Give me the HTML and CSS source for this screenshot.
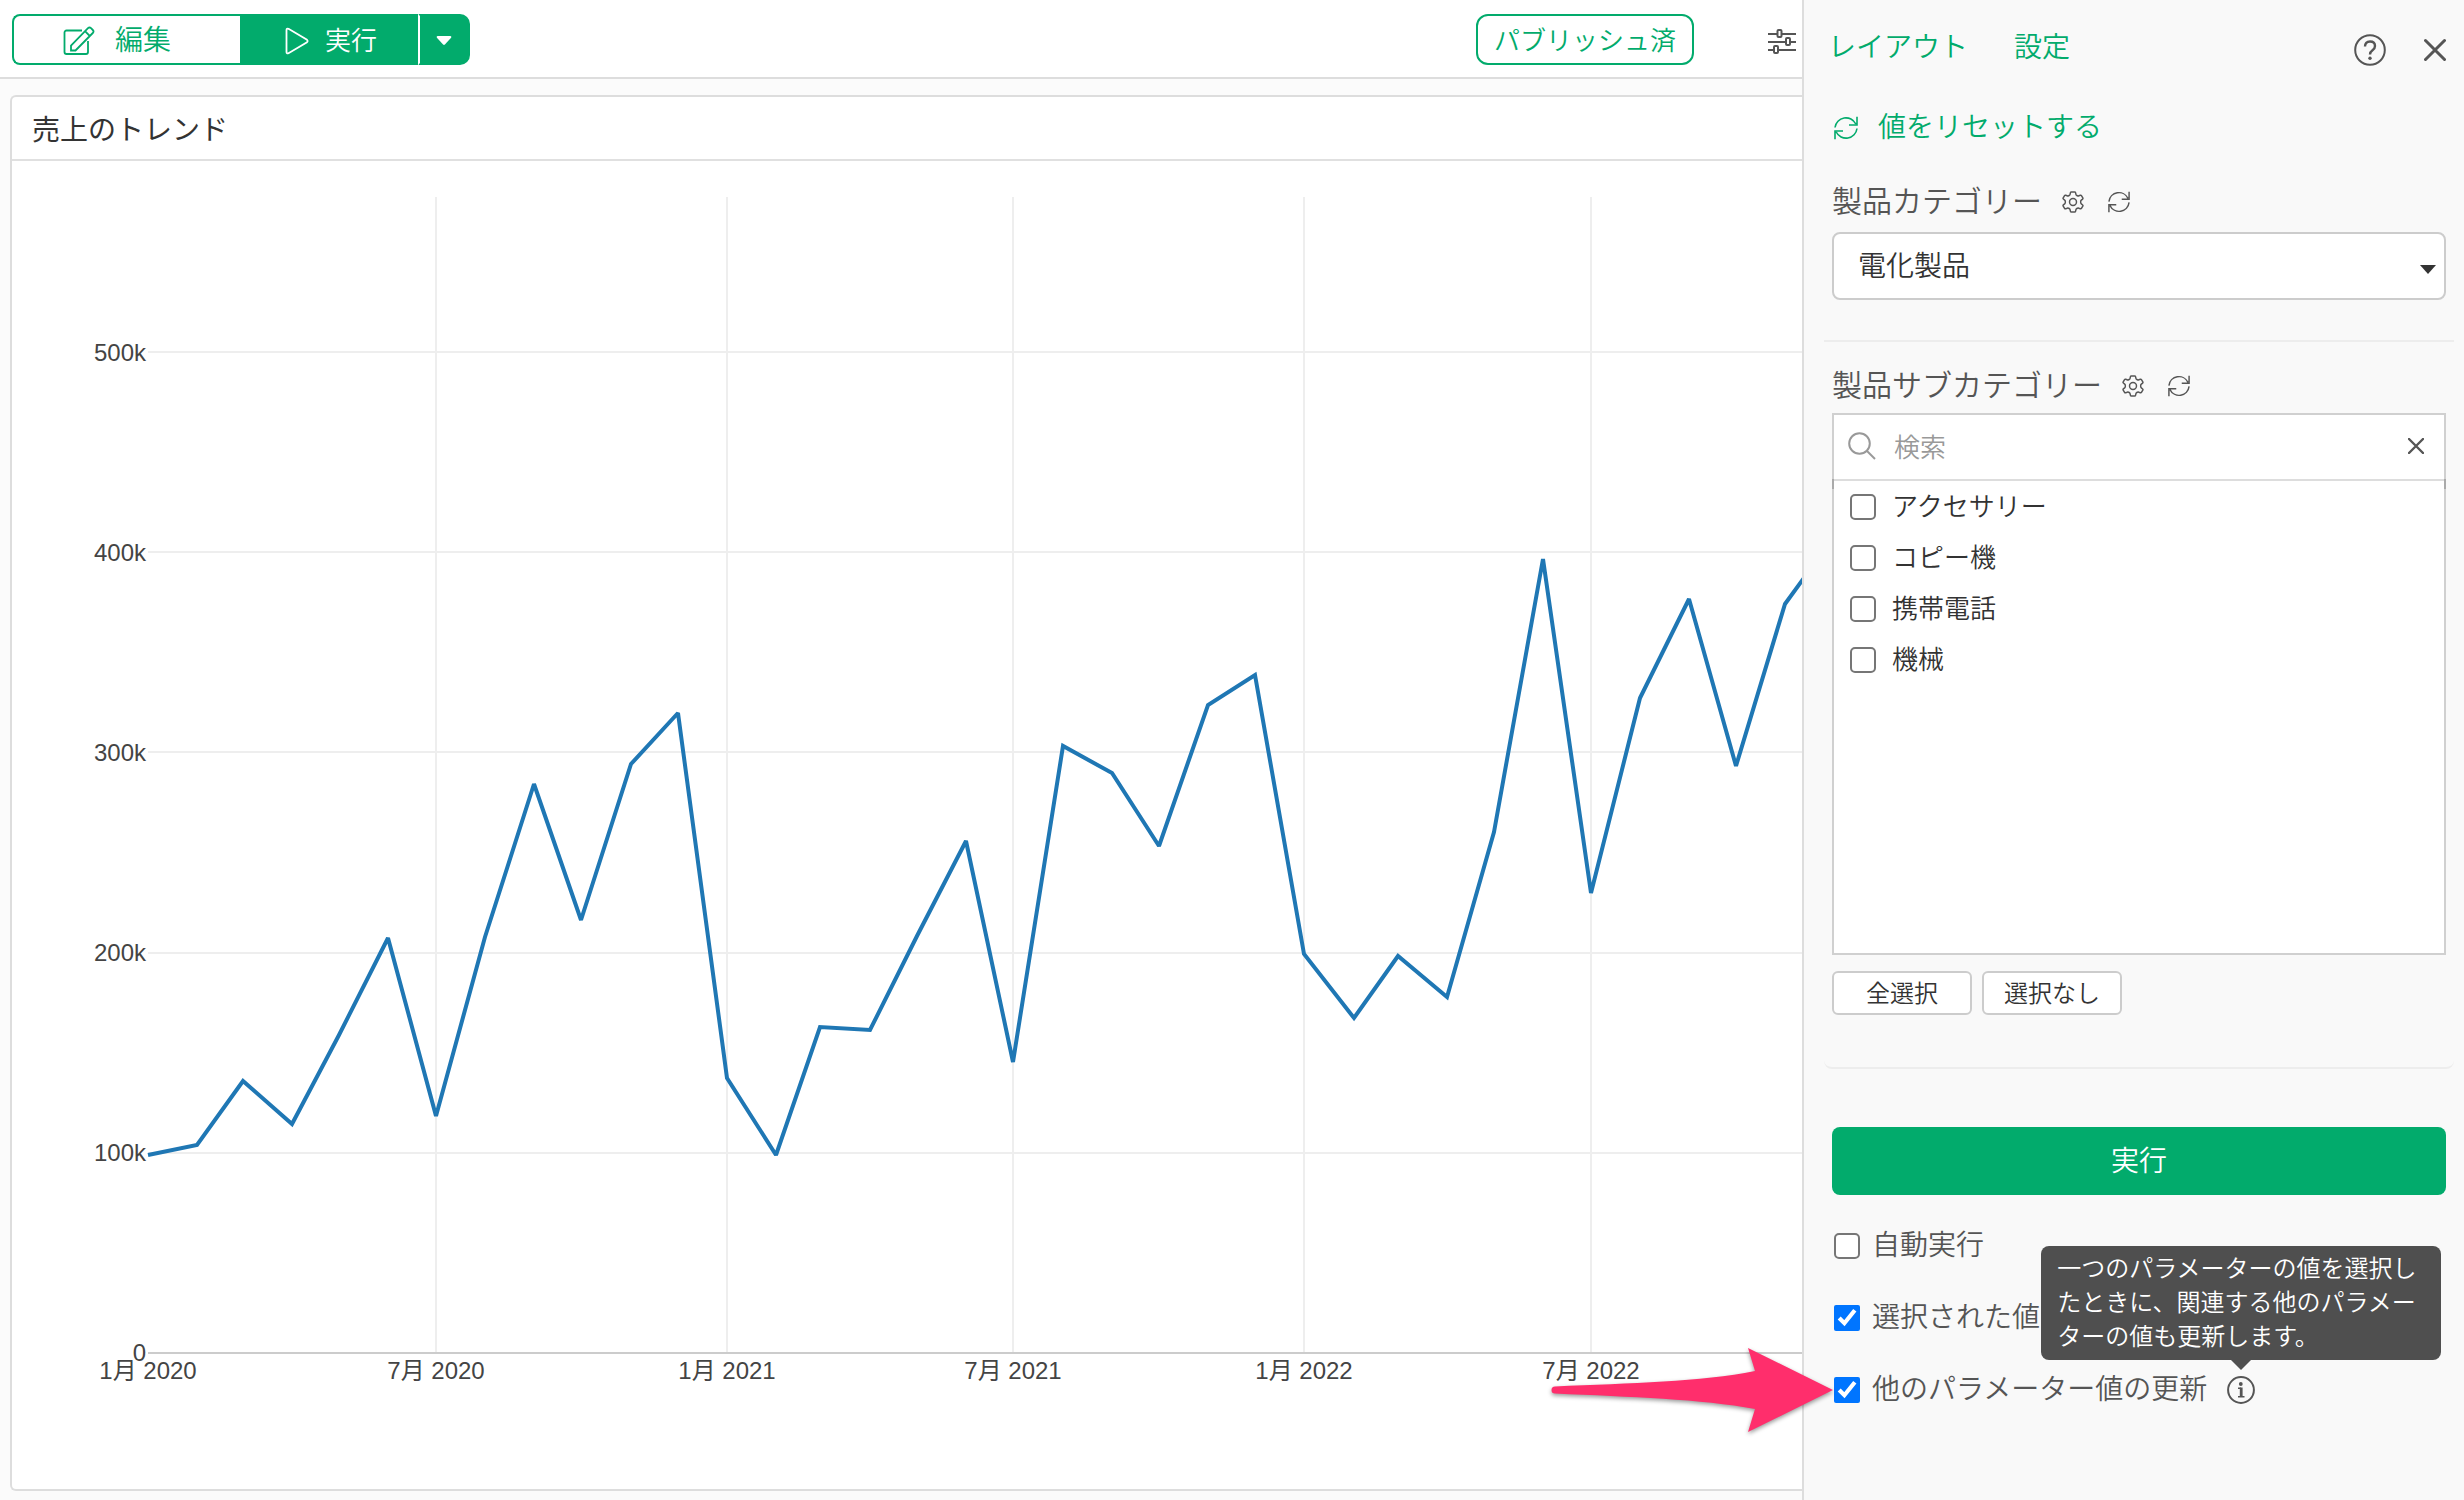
FILE: index.html
```html
<!DOCTYPE html>
<html lang="ja">
<head>
    <meta charset="UTF-8">
    <title>売上のトレンド</title>
    <link rel="stylesheet" href="styles.css">
</head>
<body>
    <!-- shared icons -->
    <svg class="sprite" aria-hidden="true">
        <symbol id="icon-refresh" viewBox="0 0 24 24">
            <path d="M1 11.500A11 11 0 0 1 21.800 8M23 .8V9h-8M23 12.500A11 11 0 0 1 2.200 16M1 23.200V15h8"/>
        </symbol>
        <symbol id="icon-gear" viewBox="0 0 24 24">
            <path stroke-linejoin="round" d="M10.200 1h3.600q.8 0 1 .8l.4 1.800q.2.900 1 1.300l.6.300q.8.400 1.600 0l1.600-.6q.8-.3 1.200.4l1.500 2.600q.4.700-.2 1.200l-1.400 1.200q-.7.600-.7 1.400v1.200q0 .8.700 1.400l1.400 1.200q.6.500.2 1.200L21.200 19q-.4.700-1.200.4l-1.600-.6q-.8-.4-1.600 0l-.6.300q-.8.400-1 1.300l-.4 1.800q-.2.800-1 .8h-3.600q-.8 0-1-.8l-.4-1.800q-.2-.9-1-1.300l-.6-.3q-.8-.4-1.600 0l-1.600.6q-.8.300-1.200-.4l-1.500-2.600q-.4-.7.2-1.200l1.400-1.200q.7-.6.700-1.400v-1.200q0-.8-.7-1.400L1.500 8.800q-.6-.5-.2-1.200L2.800 5q.4-.7 1.200-.4l1.600.6q.8.400 1.600 0l.6-.3q.8-.4 1-1.300l.4-1.800q.2-.8 1-.8z"/>
            <circle cx="12" cy="12" r="3.800"/>
        </symbol>
    </svg>

    <div class="app">
        <main class="main">
            <header class="toolbar">
                <div class="btn-group">
                    <button type="button" class="btn-edit">
                        <svg class="icon" width="32" height="30" viewBox="0 0 32 30">
                            <path stroke-width="1.800" d="M19 4.500H3.500a2 2 0 0 0-2 2V26a2 2 0 0 0 2 2H23a2 2 0 0 0 2-2V15"/>
                            <path stroke-width="1.800" d="M8 24.500v-5L25 2.200q1.500-1.500 3 0l1.800 1.800q1.500 1.500 0 3L12.500 24.500zM22 5.200l4.800 4.800"/>
                        </svg>
                        編集
                    </button>
                    <button type="button" class="btn-run">
                        <svg class="icon" width="24" height="28" viewBox="0 0 24 28">
                            <path stroke-width="1.800" d="M1.500 3v22q0 2 2 1.200l18.500-11q1.200-1.200 0-2.400L3.500 1.800q-2-.8-2 1.200z"/>
                        </svg>
                        実行
                    </button>
                    <button type="button" class="btn-more" aria-label="実行オプション">
                        <svg width="16" height="10" viewBox="0 0 16 10"><path d="M1.500 0h13q1.500.500.600 1.700L8.900 8.500q-.9.800-1.800 0L.9 1.700Q0 .500 1.500 0z" fill="#fff"/></svg>
                    </button>
                </div>
                <button type="button" class="btn-published">パブリッシュ済</button>
                <button type="button" class="icon-btn btn-sliders" aria-label="パラメーター">
                    <svg class="icon" width="28" height="26" viewBox="0 0 28 26">
                        <path d="M0 5h9.500M14 5h14M0 13h18M22.500 13H28M0 21h6M10.500 21H28"/>
                        <rect x="9.500" y="1" width="4" height="7" rx="1"/>
                        <rect x="18" y="9" width="4" height="7" rx="1"/>
                        <rect x="6" y="17" width="4" height="7" rx="1"/>
                    </svg>
                </button>
            </header>

            <section class="card">
                <h1 class="card-title">売上のトレンド</h1>
                <div class="chart">
                    <svg class="plot" role="img" aria-label="売上のトレンド">
                        <g class="grid">
                            <path d="M136 992H2400M136 792H2400M136 591H2400M136 391H2400M136 191H2400"/>
                            <path d="M424 36V1191M715 36V1191M1001 36V1191M1292 36V1191M1579 36V1191"/>
                        </g>
                        <path class="axis" d="M136 1192H2400"/>
                        <polyline class="series" points="136,994 185,984 231,920 280,963 327,874 376,777 424,955 473,776 522,623 569,759 619,603 666,552 715,917 764,994 808,866 858,869 905,775 954,680 1001,901 1051,585 1100,612 1147,685 1196,544 1243,514 1292,793 1342,857 1386,795 1435,836 1482,671 1531,398 1579,732 1628,537 1677,438 1724,605 1773,443 1821,377"/>
                        <g class="y-labels">
                            <text x="134" y="1200">0</text>
                            <text x="134" y="1000">100k</text>
                            <text x="134" y="800">200k</text>
                            <text x="134" y="600">300k</text>
                            <text x="134" y="400">400k</text>
                            <text x="134" y="200">500k</text>
                        </g>
                        <g class="x-labels">
                            <text x="136" y="1218">1月 2020</text>
                            <text x="424" y="1218">7月 2020</text>
                            <text x="715" y="1218">1月 2021</text>
                            <text x="1001" y="1218">7月 2021</text>
                            <text x="1292" y="1218">1月 2022</text>
                            <text x="1579" y="1218">7月 2022</text>
                        </g>
                    </svg>
                </div>
            </section>
        </main>

        <aside class="panel">
            <div class="panel-head">
                <a href="#">レイアウト</a>
                <a href="#">設定</a>
                <button type="button" class="icon-btn btn-help" aria-label="ヘルプ">
                    <svg class="icon" width="32" height="32" viewBox="0 0 32 32">
                        <circle cx="16" cy="16" r="14.800"/>
                        <path stroke-width="2.400" d="M11 12.500Q11 7.500 16 7.500t5 4.500q0 2.500-2.500 4.300T16 20.500"/>
                        <circle class="dot" cx="16" cy="24.300" r="1.700"/>
                    </svg>
                </button>
                <button type="button" class="icon-btn" aria-label="閉じる">
                    <svg class="icon" width="22" height="30" viewBox="0 0 22 30"><path stroke-width="3" stroke-linecap="round" d="M1.500 5.500l19 19M20.500 5.500l-19 19"/></svg>
                </button>
            </div>

            <a class="reset" href="#">
                <svg class="icon icon-thin" width="24" height="24"><use href="#icon-refresh"/></svg>
                値をリセットする
            </a>

            <section class="param">
                <div class="param-head">
                    <label for="category">製品カテゴリー</label>
                    <button type="button" class="icon-btn" aria-label="設定"><svg class="icon icon-thin" width="22" height="22"><use href="#icon-gear"/></svg></button>
                    <button type="button" class="icon-btn" aria-label="リセット"><svg class="icon icon-thin" width="22" height="22"><use href="#icon-refresh"/></svg></button>
                </div>
                <div class="select-wrap">
                    <select id="category">
                        <option>電化製品</option>
                    </select>
                    <svg class="caret" width="16" height="9" viewBox="0 0 16 9"><path d="M0 0h16L8 9z"/></svg>
                </div>
            </section>

            <section class="param param-last">
                <div class="param-head">
                    <label for="search">製品サブカテゴリー</label>
                    <button type="button" class="icon-btn" aria-label="設定"><svg class="icon icon-thin" width="22" height="22"><use href="#icon-gear"/></svg></button>
                    <button type="button" class="icon-btn" aria-label="リセット"><svg class="icon icon-thin" width="22" height="22"><use href="#icon-refresh"/></svg></button>
                </div>
                <div class="picker">
                    <div class="search">
                        <svg class="icon" width="28" height="28" viewBox="0 0 28 28"><circle cx="11.500" cy="11.500" r="10.300"/><path d="M19 19l8 8"/></svg>
                        <input type="text" id="search" placeholder="検索">
                        <button type="button" class="icon-btn" aria-label="クリア">
                            <svg class="icon" width="16" height="16" viewBox="0 0 16 16"><path stroke-width="2.400" stroke-linecap="round" d="M1 1l14 14M15 1L1 15"/></svg>
                        </button>
                    </div>
                    <div class="options">
                        <label><input type="checkbox">アクセサリー</label>
                        <label><input type="checkbox">コピー機</label>
                        <label><input type="checkbox">携帯電話</label>
                        <label><input type="checkbox">機械</label>
                    </div>
                </div>
                <div class="picker-actions">
                    <button type="button">全選択</button>
                    <button type="button">選択なし</button>
                </div>
            </section>

            <button type="button" class="btn-submit">実行</button>

            <div class="settings">
                <div class="setting">
                    <label><input type="checkbox">自動実行</label>
                </div>
                <div class="setting">
                    <label><input type="checkbox" checked>選択された値</label>
                </div>
                <div class="setting">
                    <label><input type="checkbox" checked>他のパラメーター値の更新</label>
                    <span class="info">
                        <svg class="icon" width="28" height="28" viewBox="0 0 28 28">
                            <circle cx="14" cy="14" r="12.900"/>
                            <circle class="dot" cx="13.800" cy="8" r="1.900"/>
                            <path stroke-width="1.600" d="M11 12.200h3M11 20.800h6.500"/>
                            <path stroke-width="2.800" d="M14.200 11.500v9"/>
                        </svg>
                        <span class="tooltip" role="tooltip">一つのパラメーターの値を選択したときに、関連する他のパラメーターの値も更新します。</span>
                    </span>
                    <svg class="pointer" width="290" height="100" viewBox="0 0 290 100" aria-hidden="true">
                        <path d="M4 46.500C80 43 150 42 204 31L197 8 282 50 197 92 204 69C150 59 80 57 4 53.500A3.500 3.500 0 0 1 4 46.500z"/>
                    </svg>
                </div>
            </div>
        </aside>
    </div>
</body>
</html>
```
FILE: styles.css
```css
* {
    box-sizing: border-box;
}
body {
    margin: 0;
    background: #fbfbfb;
    color: #333;
    font-family: "Liberation Sans", "Noto Sans CJK JP", sans-serif;
    font-size: 28px;
    font-weight: 350;
    line-height: 40px;
}
button, input, select {
    font: inherit;
    color: inherit;
    margin: 0;
}
button {
    padding: 2px 0 0;
    cursor: pointer;
}
a {
    color: #02ab6c;
    text-decoration: none;
}
.sprite {
    position: absolute;
    width: 0;
    height: 0;
}
.icon {
    display: block;
    flex: none;
    fill: none;
    stroke: currentColor;
    stroke-width: 2;
}
.icon-thin {
    stroke-width: 1.6;
}
.icon .dot {
    fill: currentColor;
    stroke: none;
}
.icon-btn {
    display: flex;
    padding: 0;
    border: 0;
    background: none;
    color: #555;
}
.app {
    display: flex;
    min-height: 100vh;
}
.main {
    display: flex;
    flex-direction: column;
    flex: 1;
    min-width: 0;
}

/* toolbar */
.toolbar {
    display: flex;
    align-items: center;
    height: 79px;
    padding: 2px 6px 0 12px;
    background: #fff;
    border-bottom: 2px solid #ddd;
}
.btn-group {
    display: flex;
    margin-right: auto;
}
.btn-group button {
    display: flex;
    align-items: center;
    justify-content: center;
    height: 51px;
    border: 2px solid #02ab6c;
}
.btn-group .btn-edit {
    width: 228px;
    padding-right: 20px;
    gap: 20px;
    background: #fff;
    color: #02ab6c;
    border-right: 0;
    border-radius: 8px 0 0 8px;
}
.btn-group .btn-run {
    width: 178px;
    padding-left: 4px;
    gap: 16px;
    background: #02ab6c;
    color: #fff;
    font-size: 26px;
}
.btn-group .btn-more {
    width: 52px;
    background: #02ab6c;
    border-left-color: #fff;
    border-radius: 0 10px 10px 0;
}
.btn-published {
    height: 51px;
    padding: 2px 16px 0;
    border: 2px solid #02ab6c;
    border-radius: 12px;
    background: #fff;
    color: #02ab6c;
    font-size: 26px;
}
.btn-sliders {
    margin-left: 74px;
    padding-top: 4px;
}

/* chart card */
.card {
    display: flex;
    flex-direction: column;
    flex: 1;
    margin: 16px 0 9px 10px;
    background: #fff;
    border: 2px solid #ddd;
    border-right: 0;
    border-radius: 6px 0 0 6px;
}
.card-title {
    margin: 0;
    padding: 14px 20px 8px;
    border-bottom: 2px solid #e0e0e0;
    font-size: 28px;
    font-weight: 400;
}
.chart {
    display: flex;
    flex: 1;
    min-height: 1250px;
}
.plot {
    flex: 1;
    min-width: 0;
    font-size: 24px;
    font-weight: 400;
    fill: #444;
}
.grid {
    stroke: #eee;
    stroke-width: 2;
}
.axis {
    stroke: #ccc;
    stroke-width: 2;
}
.series {
    fill: none;
    stroke: #1f77b4;
    stroke-width: 4;
    stroke-miterlimit: 2;
}
.y-labels {
    text-anchor: end;
}
.x-labels {
    text-anchor: middle;
}

/* parameter panel */
.panel {
    flex: none;
    width: 662px;
    padding: 28px 18px 40px 28px;
    background: #f9f9f9;
    border-left: 2px solid #ddd;
    color: #555;
}
.panel-head {
    display: flex;
    align-items: center;
    margin-left: -4px;
}
.panel-head a {
    margin-right: 46px;
}
.btn-help {
    margin: 0 38px 0 auto;
}
.panel-head .icon-btn {
    padding-top: 4px;
}
.reset {
    display: flex;
    align-items: center;
    gap: 20px;
    margin-top: 40px;
    padding-left: 2px;
}
.param {
    margin: 34px -8px 0;
    padding: 0 8px 40px;
    border-bottom: 2px solid #ededed;
}
.param-last {
    margin-top: 24px;
    padding-bottom: 52px;
    border-radius: 0 0 8px 8px;
}
.param-head {
    display: flex;
    align-items: center;
    gap: 24px;
    font-size: 30px;
}
.param-head label {
    margin-right: -4px;
}
.select-wrap {
    position: relative;
    margin-top: 10px;
}
.select-wrap select {
    width: 100%;
    height: 68px;
    padding: 2px 50px 0 24px;
    appearance: none;
    background: #fff;
    border: 2px solid #ccc;
    border-radius: 8px;
    color: #333;
}
.caret {
    position: absolute;
    right: 10px;
    top: 33px;
    fill: #333;
}
.picker {
    margin-top: 7px;
    height: 542px;
    background: #fff;
    border: 2px solid #d0d0d0;
    color: #333;
    font-size: 26px;
}
.search {
    display: flex;
    align-items: center;
    gap: 18px;
    height: 66px;
    padding: 0 20px 3px 14px;
    border-bottom: 2px solid #ddd;
}
.search .icon {
    color: #999;
}
.search .icon-btn .icon {
    color: #555;
}
.search input {
    flex: 1;
    min-width: 0;
    padding: 4px 0 0;
    border: 0;
    outline: 0;
    background: none;
}
.search input::placeholder {
    color: #999;
}
.options {
    position: relative;
}
/* darker ends where the list meets the search box */
.options::before {
    content: "";
    position: absolute;
    left: -2px;
    right: -2px;
    top: -2px;
    height: 10px;
    border: solid #aaa;
    border-width: 0 2px;
}
.options label {
    position: relative;
    display: flex;
    align-items: center;
    gap: 16px;
    height: 51px;
    padding-left: 16px;
}
input[type="checkbox"] {
    flex: none;
    width: 26px;
    height: 26px;
}
input[type="checkbox"]:not(:checked) {
    appearance: none;
    background: #fff;
    border: 2px solid #767676;
    border-radius: 5px;
}
.picker-actions {
    display: flex;
    gap: 10px;
    margin-top: 16px;
}
.picker-actions button {
    width: 140px;
    height: 44px;
    background: #fff;
    border: 2px solid #ccc;
    border-radius: 6px;
    color: #333;
    font-size: 24px;
    line-height: 36px;
}
.btn-submit {
    display: block;
    width: 100%;
    height: 68px;
    margin-top: 58px;
    background: #02ab6c;
    border: 0;
    border-radius: 8px;
    color: #fff;
}
.settings {
    margin-top: 15px;
}
.setting {
    position: relative;
    display: flex;
    align-items: center;
    gap: 20px;
    height: 72px;
    padding-left: 2px;
}
.setting label {
    display: flex;
    align-items: center;
    gap: 12px;
}
.info {
    position: relative;
}
.tooltip {
    position: absolute;
    right: -186px;
    bottom: 44px;
    width: 400px;
    padding: 6px 16px;
    background: #4f4f4f;
    border-radius: 8px;
    color: #fff;
    font-size: 24px;
    line-height: 34px;
}
.tooltip::after {
    content: "";
    position: absolute;
    right: 190px;
    top: 100%;
    border: 10px solid transparent;
    border-top-color: #4f4f4f;
    border-bottom: 0;
}
.pointer {
    position: absolute;
    right: 100%;
    top: -14px;
    margin-right: -9px;
    fill: #ff2e6c;
    filter: drop-shadow(0 2px 2px rgba(0, 0, 0, 0.4));
}
```
